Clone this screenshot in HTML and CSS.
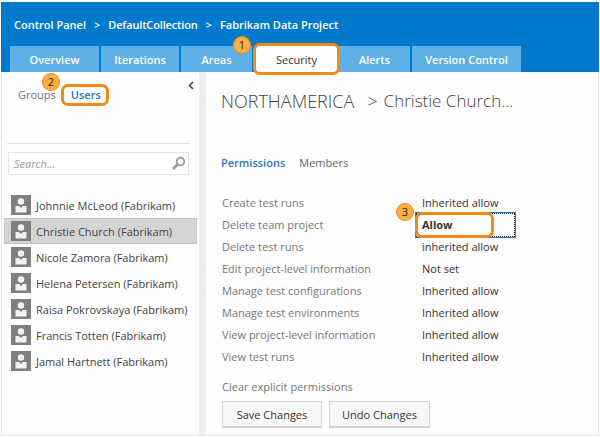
FILE: index.html
```html
<!DOCTYPE html>
<html>
<head>
<meta charset="utf-8">
<title>Control Panel</title>
<link rel="stylesheet" href="styles.css">
</head>
<body>
<div class="frame">
  <div class="header">
    <div class="crumbs"><span>Control Panel</span><span class="sep">&gt;</span><span class="crumb-mid">DefaultCollection</span><span class="sep">&gt;</span><span>Fabrikam Data Project</span></div>
    <div class="tabs">
      <div class="tab tab-overview">Overview</div>
      <div class="tab tab-iterations">Iterations</div>
      <div class="tab tab-areas">Areas</div>
      <div class="tab tab-security">Security<span class="callout callout-1">1</span></div>
      <div class="tab tab-alerts">Alerts</div>
      <div class="tab tab-version">Version Control</div>
    </div>
  </div>
  <div class="main">
    <div class="sidebar">
      <div class="pivot">
        <span class="groups">Groups</span>
        <span class="users">Users<span class="callout callout-2">2</span></span>
        <svg class="collapse" width="6" height="9" viewBox="0 0 6 9"><path d="M5 1 L1.5 4.5 L5 8" fill="none" stroke="#444" stroke-width="1.6"/></svg>
      </div>
      <div class="rule"></div>
      <div class="search">
        <span class="search-text">Search...</span>
        <svg width="15" height="15" viewBox="0 0 15 15"><circle cx="9.5" cy="5.5" r="3.8" fill="none" stroke="#999" stroke-width="1.8"/><path d="M6.6 8.4 L2 13" stroke="#999" stroke-width="2.8"/></svg>
      </div>
      <div class="people">
        <div class="person"><svg class="avatar" viewBox="0 0 20 20"><use href="#user"/></svg>Johnnie McLeod (Fabrikam)</div>
        <div class="person selected"><svg class="avatar" viewBox="0 0 20 20"><use href="#user"/></svg>Christie Church (Fabrikam)</div>
        <div class="person"><svg class="avatar" viewBox="0 0 20 20"><use href="#user"/></svg>Nicole Zamora (Fabrikam)</div>
        <div class="person"><svg class="avatar" viewBox="0 0 20 20"><use href="#user"/></svg>Helena Petersen (Fabrikam)</div>
        <div class="person"><svg class="avatar" viewBox="0 0 20 20"><use href="#user"/></svg>Raisa Pokrovskaya (Fabrikam)</div>
        <div class="person"><svg class="avatar" viewBox="0 0 20 20"><use href="#user"/></svg>Francis Totten (Fabrikam)</div>
        <div class="person"><svg class="avatar" viewBox="0 0 20 20"><use href="#user"/></svg>Jamal Hartnett (Fabrikam)</div>
      </div>
    </div>
    <div class="splitter"></div>
    <div class="content">
      <div class="title"><span>NORTHAMERICA</span><span class="title-sep">&gt;</span><span class="title-name">Christie Church...</span></div>
      <div class="subtabs"><span class="active">Permissions</span><span>Members</span></div>
      <div class="perms">
        <div class="perm"><span class="perm-name">Create test runs</span><span>Inherited allow</span></div>
        <div class="perm"><span class="perm-name">Delete team project</span><span class="allow-box"><span class="callout callout-3">3</span><span class="allow-mark">Allow</span></span></div>
        <div class="perm"><span class="perm-name">Delete test runs</span><span>inherited allow</span></div>
        <div class="perm"><span class="perm-name">Edit project-level information</span><span>Not set</span></div>
        <div class="perm"><span class="perm-name">Manage test configurations</span><span>Inherited allow</span></div>
        <div class="perm"><span class="perm-name">Manage test environments</span><span>Inherited allow</span></div>
        <div class="perm"><span class="perm-name">View project-level information</span><span>Inherited allow</span></div>
        <div class="perm"><span class="perm-name">View test runs</span><span>Inherited allow</span></div>
      </div>
      <div class="clear">Clear explicit permissions</div>
      <div class="buttons"><button class="btn btn-save">Save Changes</button><button class="btn btn-undo">Undo Changes</button></div>
    </div>
  </div>
</div>
<svg width="0" height="0" class="defs"><defs>
  <g id="user"><rect width="20" height="20" fill="#7f7f7f"/><circle cx="10" cy="6.5" r="3.2" fill="#f2f2f2"/><path d="M4.5 11 H8 L10 13 L12 11 H15.5 V17.5 H4.5 Z" fill="#f2f2f2"/></g>
</defs></svg>
</body>
</html>
```
FILE: styles.css
```css
html, body {
  margin: 0;
  padding: 0;
  background: #fff;
}

body {
  width: 600px;
  height: 437px;
  overflow: hidden;
  font-family: "Open Sans", "Noto Sans", sans-serif;
  font-size: 11px;
  color: #333;
}

.defs {
  position: absolute;
}

.frame {
  box-sizing: border-box;
  width: 600px;
  height: 434px;
  margin-top: 2px;
  padding: 0 1px;
  border-bottom: 1px solid #e4e4e4;
  display: flex;
  flex-direction: column;
}

/* header */
.header {
  background: #007acc;
  height: 70px;
  box-sizing: border-box;
  padding-left: 9px;
}

.crumbs {
  color: #fff;
  font-weight: 600;
  height: 44px;
  line-height: 46px;
  padding-left: 4px;
  display: flex;
}

.crumbs .sep {
  margin: 0 8px;
}

.crumb-mid {
  letter-spacing: -0.15px;
}

.tabs {
  display: flex;
  gap: 2px;
  height: 26px;
}

.tab {
  background: #5eb0e6;
  color: #fff;
  font-weight: 600;
  line-height: 28px;
  text-align: center;
  position: relative;
}

.tab-overview { width: 89px; }
.tab-iterations { width: 78px; }
.tab-areas { width: 71px; }
.tab-alerts { width: 71px; }
.tab-version { width: 109px; }

.tab-security {
  width: 87px;
  height: 32px;
  box-sizing: border-box;
  margin: -3px -3px 0 -1px;
  background: #fff;
  color: #333;
  font-weight: 400;
  border: 3px solid #f28a14;
  border-radius: 7px;
  line-height: 28px;
  z-index: 1;
}

.callout {
  position: absolute;
  box-sizing: border-box;
  width: 18px;
  height: 18px;
  border-radius: 50%;
  background: #fbb040;
  border: 1px solid #f28a14;
  color: #222;
  font-weight: 400;
  font-size: 11px;
  line-height: 16px;
  text-align: center;
}

.callout-1 { left: -23px; top: -10px; }
.callout-2 { left: -22px; top: -14px; }
.callout-3 { left: -21px; top: -11px; z-index: 2; }

/* sidebar */
.main {
  flex: 1;
  display: flex;
  background: #fdfdfd;
  border-left: 1px solid #e8e8e8;
  border-right: 1px solid #e8e8e8;
}

.sidebar {
  width: 197px;
  box-sizing: border-box;
}

.pivot {
  position: relative;
  height: 71px;
  padding: 12px 0 0 16px;
  box-sizing: border-box;
  display: flex;
  align-items: flex-start;
}

.groups {
  color: #777;
  margin-right: 5px;
  line-height: 22px;
}

.users {
  position: relative;
  box-sizing: border-box;
  height: 22px;
  padding: 0 5px 0 7px;
  border: 3px solid #f28a14;
  border-radius: 7px;
  color: #2a7ab9;
  font-weight: 600;
  line-height: 16px;
}

.collapse {
  position: absolute;
  right: 5px;
  top: 9px;
}

.rule {
  height: 1px;
  margin: 0 9px 0 5px;
  background: #e4e4e4;
}

.search {
  box-sizing: border-box;
  height: 23px;
  margin: 8px 10px 0 6px;
  border: 1px solid #e4e4e4;
  background: #fff;
  display: flex;
  align-items: center;
  justify-content: space-between;
  padding: 0 2px 0 5px;
}

.search-text {
  font-style: italic;
  color: #999;
}

.people {
  margin-top: 17px;
}

.person {
  height: 26px;
  display: flex;
  align-items: center;
  gap: 5px;
  color: #444;
  box-sizing: border-box;
  border: 1px solid transparent;
  border-width: 1px 0;
  margin: 0 2px;
  padding-left: 7px;
}

.person.selected {
  background: #d4d4d4;
  border: 1px solid #c4c4c4;
  padding-left: 6px;
}

.avatar {
  width: 20px;
  height: 20px;
  flex: none;
}

.splitter {
  width: 7px;
  background: #eee;
}

/* right side */
.content {
  flex: 1;
  padding: 0 0 0 15px;
}

.title {
  margin-top: 16px;
  height: 30px;
  font-size: 18px;
  font-weight: 300;
  line-height: 26px;
  color: #444;
  display: flex;
}

.title-sep {
  margin: 0 6px 0 13px;
}

.title-name {
  font-size: 17px;
}

.subtabs {
  margin-top: 37px;
  height: 26px;
  display: flex;
  gap: 14px;
  color: #666;
  line-height: 16px;
}

.subtabs .active {
  color: #2a7ab9;
  font-weight: 600;
}

.perms {
  margin-top: 11px;
}

.perm {
  height: 22px;
  line-height: 22px;
  display: flex;
}

.perm-name {
  width: 200px;
  margin-left: 1px;
  color: #777;
}

.allow-box {
  position: relative;
  box-sizing: border-box;
  width: 99px;
  height: 24px;
  margin: -1px 0 -1px -6px;
  border: 1px dotted #111;
  outline: 1px solid #2a7ab9;
}

.allow-mark {
  position: absolute;
  left: -2px;
  top: -2px;
  box-sizing: border-box;
  width: 79px;
  height: 26px;
  padding-left: 4px;
  background: #fff;
  border: 3px solid #f28a14;
  border-radius: 7px;
  font-weight: 700;
  line-height: 20px;
  color: #333;
}

.clear {
  margin: 11px 0 0 1px;
  color: #777;
  line-height: 16px;
}

.buttons {
  margin: 6px 0 0 1px;
  display: flex;
  gap: 7px;
}

.btn {
  height: 27px;
  padding: 0;
  font: inherit;
  color: #333;
  background: #f8f8f8;
  border: 1px solid #d4d4d4;
  border-width: 1px 1px 2px;
}

.btn-save { width: 100px; }
.btn-undo { width: 101px; }
```
